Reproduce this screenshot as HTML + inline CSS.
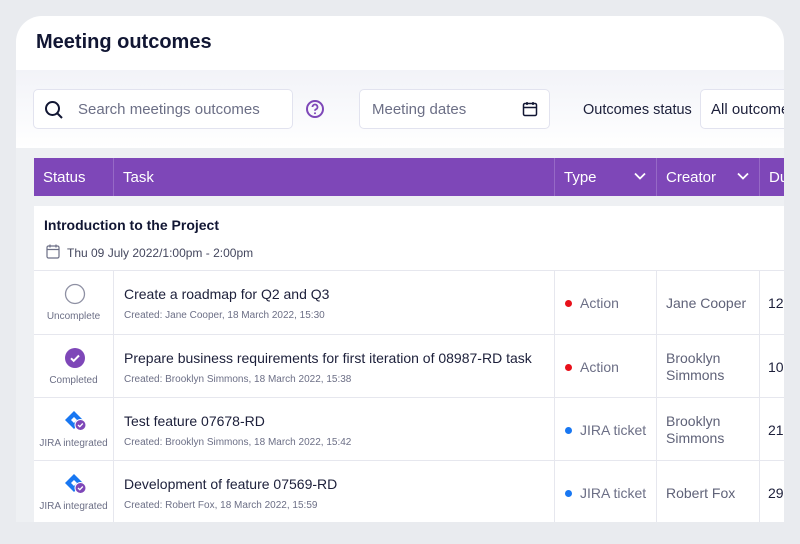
<!DOCTYPE html><html><head><style>
*{box-sizing:border-box;margin:0;padding:0}
body{width:800px;height:544px;background:#e9ebef;font-family:"Liberation Sans",sans-serif;overflow:hidden;position:relative;color:#1c1f3a}
.card{position:absolute;left:16px;top:16px;width:768px;height:506px;background:#eef0f3;border-radius:26px 26px 0 0;overflow:hidden}
.hdr{position:absolute;left:0;top:0;width:768px;height:54px;background:#fff}
.hdr h1{position:absolute;left:20px;top:15px;font-size:20px;font-weight:bold;color:#111633}
.flt{position:absolute;left:0;top:54px;width:768px;height:78px;background:linear-gradient(#f2f3f8,#fff)}
.box{position:absolute;background:#fff;border:1px solid #e2e3ef;border-radius:5px;height:40px;font-size:15px;color:#6c6f86;line-height:40px}
.th{position:absolute;top:142px;height:38px;background:#7e47b8;color:#fff;font-size:15px;line-height:40px;padding-left:9px;border-right:1px solid #9669c6}
.th svg{position:absolute;right:10px;top:14px}
.g{position:absolute;left:18px;top:190px;width:750px;height:64px;background:#fff}
.row{position:absolute;left:18px;width:750px;height:62px;background:#fff;border-top:1px solid #e6e7ee}
.c{position:absolute;top:0;height:100%;border-right:1px solid #e6e7ee}
.st{left:0;width:80px;text-align:center;font-size:10px;color:#6c6f86}
.st .lab{position:absolute;left:0;right:0;top:40px}
.tk{left:80px;width:441px;padding-left:10px}
.tk .t{position:absolute;top:15px;font-size:14px;color:#1c1f3a}
.tk .s{position:absolute;top:39px;font-size:10px;color:#6c6f86}
.ty{left:521px;width:102px;font-size:14px;color:#6c6f86;padding-left:25px;line-height:64px}
.ty i{position:absolute;left:10px;top:29px;width:7px;height:7px;border-radius:50%}
.cr{left:623px;width:103px;font-size:14px;color:#5f6278;padding-left:9px}
.du{left:726px;width:30px;font-size:14px;color:#1c1f3a;padding-left:8px;line-height:64px;border:none}
.icon{position:absolute;left:30px;top:12px}
</style></head><body>
<div class="card">
<div class="hdr"><h1>Meeting outcomes</h1></div>
<div class="flt">
<div class="box" style="left:17px;top:19px;width:260px;padding-left:44px">Search meetings outcomes
<svg style="position:absolute;left:10px;top:10px" width="20" height="20" viewBox="0 0 20 20"><circle cx="8.5" cy="8.5" r="6.5" fill="none" stroke="#111633" stroke-width="2"/><path d="M13.5 13.5L18 18" stroke="#111633" stroke-width="2"/></svg></div>
<svg style="position:absolute;left:289px;top:29px" width="20" height="20" viewBox="0 0 20 20"><circle cx="10" cy="10" r="8" fill="none" stroke="#7e47b8" stroke-width="2"/><path d="M7.5 8a2.5 2.5 0 1 1 3.5 2.3c-.7.3-1 .8-1 1.5" fill="none" stroke="#7e47b8" stroke-width="1.8"/><circle cx="10" cy="14.3" r="1" fill="#7e47b8"/></svg>
<div class="box" style="left:343px;top:19px;width:191px;padding-left:12px">Meeting dates
<svg style="position:absolute;left:162px;top:11px" width="16" height="16" viewBox="0 0 16 16"><rect x="1.5" y="2.5" width="13" height="12" rx="1.5" fill="none" stroke="#111633" stroke-width="1.5"/><path d="M1.5 6.5h13M5 1v3M11 1v3" stroke="#111633" stroke-width="1.5"/></svg></div>
<div style="position:absolute;left:567px;top:32px;font-size:14.5px;color:#1c1f3a">Outcomes status</div>
<div class="box" style="left:684px;top:19px;width:100px;padding-left:10px;color:#1c1f3a;border-right:none">All outcomes</div>
</div>
<div class="th" style="left:18px;width:80px">Status</div>
<div class="th" style="left:98px;width:441px">Task</div>
<div class="th" style="left:539px;width:102px">Type<svg width="12" height="8" viewBox="0 0 12 8"><path d="M1 1.5l5 5 5-5" fill="none" stroke="#fff" stroke-width="1.8"/></svg></div>
<div class="th" style="left:641px;width:103px">Creator<svg width="12" height="8" viewBox="0 0 12 8"><path d="M1 1.5l5 5 5-5" fill="none" stroke="#fff" stroke-width="1.8"/></svg></div>
<div class="th" style="left:744px;width:30px;border:none">Du</div>
<div class="g"><div style="position:absolute;left:10px;top:11px;font-size:14px;font-weight:bold;color:#111633">Introduction to the Project</div>
<svg style="position:absolute;left:12px;top:38px" width="14" height="15" viewBox="0 0 14 15"><rect x="1" y="2" width="12" height="12" rx="1.5" fill="none" stroke="#6c6f86" stroke-width="1.2"/><path d="M1 5.5h12M4 0.5v3M10 0.5v3" stroke="#6c6f86" stroke-width="1.2"/></svg>
<div style="position:absolute;left:33px;top:40px;font-size:12px;color:#44475e">Thu 09 July 2022/1:00pm - 2:00pm</div></div>

<div class="row" style="top:254px;height:64px">
<div class="c st"><svg class="icon" width="22" height="22"><circle cx="11" cy="11" r="9.5" fill="none" stroke="#8e90a3" stroke-width="1.3"/></svg><div class="lab">Uncomplete</div></div>
<div class="c tk"><div class="t">Create a roadmap for Q2 and Q3</div><div class="s">Created: Jane Cooper, 18 March 2022, 15:30</div></div>
<div class="c ty"><i style="background:#e8101a"></i>Action</div>
<div class="c cr" style="line-height:64px">Jane Cooper</div>
<div class="c du">12</div></div>

<div class="row" style="top:318px;height:63px">
<div class="c st"><svg class="icon" width="22" height="22"><circle cx="11" cy="11" r="10" fill="#7e47b8"/><path d="M7 11.3l2.7 2.6L15 8.5" fill="none" stroke="#fff" stroke-width="2"/></svg><div class="lab">Completed</div></div>
<div class="c tk"><div class="t">Prepare business requirements for first iteration of 08987-RD task</div><div class="s">Created: Brooklyn Simmons, 18 March 2022, 15:38</div></div>
<div class="c ty"><i style="background:#e8101a"></i>Action</div>
<div class="c cr" style="padding-top:15px;line-height:17px">Brooklyn<br>Simmons</div>
<div class="c du">10</div></div>

<div class="row" style="top:381px;height:63px">
<div class="c st"><svg class="icon" width="24" height="22"><path d="M10 1L19 10 10 19 1 10Z" fill="#1877f2"/><path d="M10 7L13 10 10 13 7 10Z" fill="#fff"/><circle cx="16.5" cy="15" r="5.5" fill="#7e47b8" stroke="#fff" stroke-width="1"/><path d="M14 15l1.8 1.7 3-3.2" fill="none" stroke="#fff" stroke-width="1.3"/></svg><div class="lab">JIRA integrated</div></div>
<div class="c tk"><div class="t">Test feature 07678-RD</div><div class="s">Created: Brooklyn Simmons, 18 March 2022, 15:42</div></div>
<div class="c ty"><i style="background:#1877f2"></i>JIRA ticket</div>
<div class="c cr" style="padding-top:15px;line-height:17px">Brooklyn<br>Simmons</div>
<div class="c du">21</div></div>

<div class="row" style="top:444px;height:62px">
<div class="c st"><svg class="icon" width="24" height="22"><path d="M10 1L19 10 10 19 1 10Z" fill="#1877f2"/><path d="M10 7L13 10 10 13 7 10Z" fill="#fff"/><circle cx="16.5" cy="15" r="5.5" fill="#7e47b8" stroke="#fff" stroke-width="1"/><path d="M14 15l1.8 1.7 3-3.2" fill="none" stroke="#fff" stroke-width="1.3"/></svg><div class="lab">JIRA integrated</div></div>
<div class="c tk"><div class="t">Development of feature 07569-RD</div><div class="s">Created: Robert Fox, 18 March 2022, 15:59</div></div>
<div class="c ty"><i style="background:#1877f2"></i>JIRA ticket</div>
<div class="c cr" style="line-height:64px">Robert Fox</div>
<div class="c du">29</div></div>
</div>
</body></html>
